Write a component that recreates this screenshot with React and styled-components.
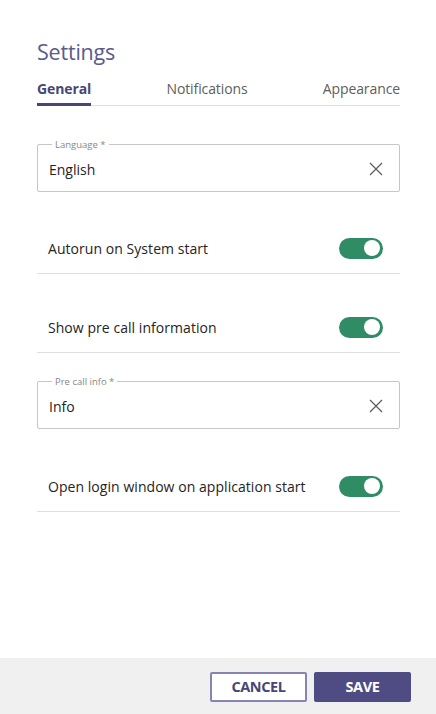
import React from 'react';
import styled, { createGlobalStyle } from 'styled-components';

const GlobalStyle = createGlobalStyle`
  html, body {
    margin: 0;
    padding: 0;
    background: #ffffff;
  }
  body {
    font-family: "Open Sans", "Noto Sans", "Liberation Sans", sans-serif;
    color: #252423;
  }
`;

const Page = styled.div`
  width: 436px;
  height: 714px;
  display: flex;
  flex-direction: column;
  background: #ffffff;
`;

const Body = styled.div`
  flex: 1;
  padding: 38px 36px 0 37px;
`;

const Title = styled.h1`
  margin: 0;
  font-size: 21.5px;
  font-weight: 400;
  color: #5b5a8c;
  line-height: 28px;
  letter-spacing: -0.2px;
`;

const Tabs = styled.div`
  display: flex;
  justify-content: space-between;
  margin-top: 13px;
  border-bottom: 1px solid #e1dfdd;
`;

const Tab = styled.div`
  font-size: 14px;
  line-height: 19px;
  padding-bottom: 5px;
  margin-bottom: -1px;
  letter-spacing: -0.1px;
  color: ${p => (p.active ? '#464775' : '#605e5c')};
  font-weight: ${p => (p.active ? 700 : 400)};
  border-bottom: 3px solid ${p => (p.active ? '#464775' : 'transparent')};
`;

const Field = styled.div`
  margin-top: ${p => p.top}px;
  padding: 0 11px;
  height: 48px;
  box-sizing: border-box;
  border: 1px solid #c8c6c4;
  border-radius: 2px;
  display: flex;
  align-items: center;
  position: relative;
`;

const FloatingLabel = styled.span`
  position: absolute;
  top: -6px;
  left: 14px;
  font-size: 9.5px;
  color: #8a8886;
  padding: 0 3px;
  line-height: 11px;
  background: #ffffff;
`;

const Value = styled.div`
  flex: 1;
  font-size: 14px;
  color: #252423;
  margin-top: 3px;
`;

const ClearButton = styled.button`
  border: none;
  background: none;
  padding: 0;
  margin-top: 2px;
  margin-right: 3px;
  width: 18px;
  height: 18px;
  display: flex;
  align-items: center;
  justify-content: center;
`;

const Row = styled.div`
  display: flex;
  align-items: center;
  justify-content: space-between;
  height: 50px;
  margin-top: ${p => p.top}px;
  padding: 0 17px 0 11px;
  border-bottom: 1px solid #e1dfdd;
`;

const RowLabel = styled.span`
  font-size: 14px;
  color: #252423;
  letter-spacing: 0.05px;
`;

const Switch = styled.div`
  width: 44px;
  height: 21px;
  border-radius: 11px;
  background: #2f8c65;
  position: relative;
  flex-shrink: 0;

  &::after {
    content: '';
    position: absolute;
    right: 3px;
    top: 2.5px;
    width: 16px;
    height: 16px;
    border-radius: 50%;
    background: #ffffff;
  }
`;

const Footer = styled.div`
  height: 56px;
  background: #f0f0f0;
  display: flex;
  align-items: center;
  justify-content: flex-end;
  gap: 7px;
  padding: 0 25px 0 0;
`;

const Button = styled.button`
  width: 97px;
  height: 30px;
  box-sizing: border-box;
  border-radius: 2px;
  font-family: "Open Sans", "Noto Sans", sans-serif;
  font-size: 14.5px;
  font-weight: 700;
  letter-spacing: -0.4px;
  border: 2px solid ${p => (p.primary ? '#4e4c82' : '#8584b3')};
  background: ${p => (p.primary ? '#4e4c82' : '#ffffff')};
  color: ${p => (p.primary ? '#ffffff' : '#464775')};
  margin-top: 1px;
`;

const CloseIcon = () => (
  <svg width="14" height="14" viewBox="0 0 14 14">
    <path d="M1 1 L13 13 M13 1 L1 13" stroke="#605e5c" strokeWidth="1.3" fill="none" />
  </svg>
);

const TextField = ({ label, value, top }) => (
  <Field top={top}>
    <FloatingLabel>{label}</FloatingLabel>
    <Value>{value}</Value>
    <ClearButton aria-label="clear">
      <CloseIcon />
    </ClearButton>
  </Field>
);

const ToggleRow = ({ label, top }) => (
  <Row top={top}>
    <RowLabel>{label}</RowLabel>
    <Switch />
  </Row>
);

export default function App() {
  return (
    <Page>
      <GlobalStyle />
      <Body>
        <Title>Settings</Title>
        <Tabs>
          <Tab active>General</Tab>
          <Tab>Notifications</Tab>
          <Tab>Appearance</Tab>
        </Tabs>
        <TextField label="Language *" value="English" top={38} />
        <ToggleRow label="Autorun on System start" top={31} />
        <ToggleRow label="Show pre call information" top={28} />
        <TextField label="Pre call info *" value="Info" top={28} />
        <ToggleRow label="Open login window on application start" top={32} />
      </Body>
      <Footer>
        <Button>CANCEL</Button>
        <Button primary>SAVE</Button>
      </Footer>
    </Page>
  );
}
